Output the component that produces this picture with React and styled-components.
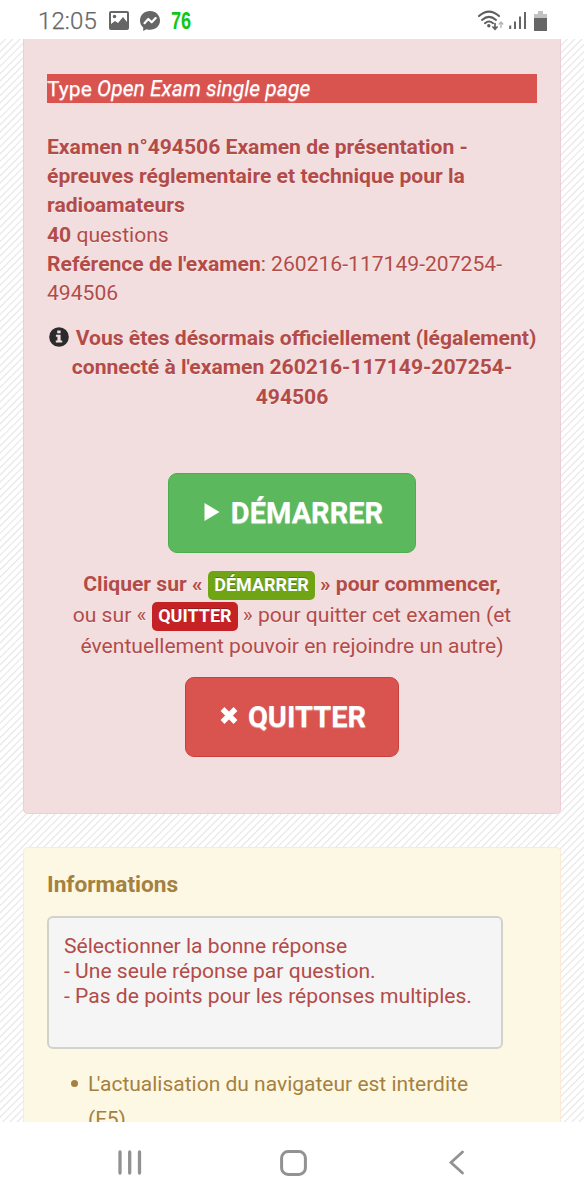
import React from "react";
import styled, { createGlobalStyle } from "styled-components";

const GlobalStyle = createGlobalStyle`
  * { box-sizing: border-box; }
  body { margin: 0; background: #fff; font-family: Roboto, "Liberation Sans", sans-serif; }
`;

const Screen = styled.div`
  width: 584px;
  height: 1200px;
  display: flex;
  flex-direction: column;
  overflow: hidden;
`;

const StatusBar = styled.header`
  flex: none;
  height: 39px;
  padding: 2px 37px 0 38px;
  display: flex;
  align-items: center;
  justify-content: space-between;
  color: #666;
`;

const StatusGroup = styled.div`
  display: flex;
  align-items: center;
  gap: ${(p) => p.$gap}px;
`;

const Clock = styled.span`
  width: 60px;
  font-size: 24px;
  font-weight: 300;
  -webkit-text-stroke: 0.25px #666;
  line-height: 36px;
  letter-spacing: 0.1px;
  white-space: nowrap;
`;

const BatteryLevel = styled.span`
  color: #0fc816;
  font: 700 23px/30px "Liberation Sans", sans-serif;
  width: 21px;
  white-space: nowrap;

  span {
    display: inline-block;
    transform: scaleX(0.79);
    transform-origin: left;
  }
`;

const Page = styled.main`
  flex: none;
  height: 1083px;
  overflow: hidden;
  padding: 0 23px;
  display: flex;
  flex-direction: column;
  gap: 33px;
  background: repeating-linear-gradient(135deg, #fff 0 2.8px, #e6e6e6 3.9px, #fff 5.1px 5.16px);
`;

const ExamCard = styled.section`
  flex: none;
  height: 775px;
  padding: 35px 23px 0;
  background: #f2dede;
  border: 1px solid #edced4;
  border-top: 0;
  border-radius: 0 0 5px 5px;
  color: #b34b49;
  font-size: 21.1px;
  line-height: 29.2px;
`;

const TypeBanner = styled.div`
  height: 29px;
  margin-bottom: 29px;
  background: #d9534f;
  color: #fff;
  text-shadow: 0 1px 1px rgba(255, 255, 255, 0.5);
  white-space: nowrap;
`;

const ExamSummary = styled.div`
  white-space: nowrap;
  text-shadow: 0 1px 0 rgba(255, 255, 255, 0.45);
`;

const Connected = styled.div`
  margin: 16px -10px 0;
  text-align: center;
  font-weight: 700;
  white-space: nowrap;
  text-shadow: 0 1px 0 rgba(255, 255, 255, 0.45);

  svg { vertical-align: -2px; margin: 0 7px 0 1px; }
`;

const ActionButton = styled.button`
  display: flex;
  align-items: center;
  justify-content: center;
  gap: ${(p) => p.$gap}px;
  width: ${(p) => p.$width}px;
  height: 80px;
  margin: ${(p) => p.$top}px auto 0;
  padding: 0 0 0 ${(p) => p.$shift}px;
  border: 1px solid ${(p) => p.$edge};
  border-radius: 9px;
  background: ${(p) => p.$fill};
  color: #fff;
  font: 700 29px/40px Roboto, sans-serif;
  text-shadow: 0 1px 1px rgba(255, 255, 255, 0.6);
  white-space: nowrap;
`;

const Instructions = styled.p`
  margin: 16px -10px 0;
  text-align: center;
  line-height: 30.8px;
  white-space: nowrap;
  text-shadow: 0 1px 0 rgba(255, 255, 255, 0.45);
`;

const Tag = styled.span`
  display: inline-block;
  height: 29px;
  padding: 0 6px;
  margin-left: 0.5px;
  border-radius: 5px;
  background: ${(p) => p.$fill};
  color: #fff;
  font-size: 18px;
  font-weight: 700;
  line-height: 28px;
  text-shadow: 0 -1px 0 rgba(0, 0, 0, 0.25);
  vertical-align: middle;
`;

const InfoCard = styled.section`
  flex: none;
  height: 320px;
  padding: 21px 23px 0;
  background: #fcf8e3;
  border: 1px solid #faebd2;
  border-radius: 5px;
  color: #a5803f;
  font-size: 21px;
`;

const InfoTitle = styled.h2`
  margin: 0;
  font-size: 22.7px;
  font-weight: 700;
  line-height: 32px;
`;

const RulesBox = styled.div`
  width: 456px;
  height: 133px;
  margin-top: 15px;
  padding: 15px 15px;
  border: 2px solid #d2d2cd;
  border-radius: 6px;
  background: #f5f5f5;
  color: #b34b49;
  font-size: 21.1px;
  line-height: 25px;
  white-space: nowrap;
`;

const RuleList = styled.ul`
  margin: 18px 0 0;
  padding: 0 0 0 41px;
  line-height: 35px;
  white-space: nowrap;
  list-style: none;
`;

const Rule = styled.li`
  &::before {
    content: "";
    display: inline-block;
    width: 7px;
    height: 7px;
    margin: 0 10px 0 -17px;
    border-radius: 50%;
    background: currentColor;
    vertical-align: 4px;
  }
`;

const Elision = styled.span`
  letter-spacing: -2.5px;
`;

const NavBar = styled.nav`
  flex: 1;
  display: flex;
  align-items: center;
  justify-content: space-between;
  padding: 3px 117px 0;

  svg:nth-child(2) { margin-right: 4px; }
`;

const ImageIcon = () => (
  <svg width="20" height="19" viewBox="0 0 20 19">
    <path fillRule="evenodd" fill="#666" d="M2 0h16a2 2 0 0 1 2 2v15a2 2 0 0 1-2 2H2a2 2 0 0 1-2-2V2a2 2 0 0 1 2-2zM2 2v11l4-3 3 2 5-6 4 5V2zM5.500 3.700a1.800 1.800 0 1 1 0 3.600 1.800 1.800 0 0 1 0-3.600z" />
  </svg>
);

const MessengerIcon = () => (
  <svg width="20" height="20" viewBox="0 0 20 20">
    <path fill="#666" d="M10 0C4.300 0 0 4.100 0 9.500c0 3 1.200 5.200 3.200 6.900V20l3.200-1.700c1.100.4 2.300.5 3.600.5 5.700 0 10-4 10-9.300S15.700 0 10 0z" />
    <path fill="none" stroke="#fff" strokeWidth="2.2" strokeLinejoin="round" strokeLinecap="round" d="M4.500 12.200 8.300 8l3.400 3.300 4-4.200" />
  </svg>
);

const WifiIcon = () => (
  <svg width="26" height="21" viewBox="0 0 26 21" fill="none" stroke="#5e5e5e" strokeWidth="2" strokeLinecap="round">
    <path d="M1 6.100Q11 -2.900 21 6.100M4 9.900Q11 3.900 18 9.900M7 13.200Q11 9.900 15 13.200" />
    <circle cx="10.800" cy="15.700" r="1.700" fill="#5e5e5e" stroke="none" />
    <path d="M17 13.500v5M14.900 17l2.100 2.200 2.100-2.200" strokeWidth="1.700" />
    <path d="M23 17.500v-5M21.200 14l1.800-2 1.800 2" stroke="#b5b5b5" strokeWidth="1.400" />
  </svg>
);

const SignalIcon = () => (
  <svg width="17" height="19" viewBox="0 0 17 19" fill="none" stroke="#666" strokeWidth="2">
    <path d="M1.200 14.500V18M6 10.500V18M11 5.500V18M16 1V18" />
  </svg>
);

const BatteryIcon = () => (
  <svg width="13" height="20" viewBox="0 0 13 20">
    <path fill="#c1c1c1" d="M4 0h5v3h4v5H0V3h4z" />
    <path fill="#666" d="M0 7h13v13H0z" />
  </svg>
);

const InfoIcon = () => (
  <svg width="20" height="20" viewBox="0 0 20 20">
    <circle cx="10" cy="10" r="9.800" fill="#2b2b2d" />
    <path fill="#f2dede" d="M8.200 3.500h3.400v2.700H8.200zM6.900 7.700h4.700v5.800h1.600v2H6.800v-2h1.600V9.700H6.900z" />
  </svg>
);

const PlayIcon = () => (
  <svg width="16" height="19" viewBox="0 0 16 19">
    <path fill="#fff" d="M0.500 0 15.500 9 0.500 18z" />
  </svg>
);

const CloseIcon = () => (
  <svg width="18" height="20" viewBox="0 0 18 20">
    <path stroke="#fff" strokeWidth="5.400" d="M2.500 2 15.500 15M15.500 2 2.500 15" />
  </svg>
);

const RecentsIcon = () => (
  <svg width="25" height="25" viewBox="0 0 25 25">
    <path stroke="#929292" strokeWidth="3.300" strokeLinecap="round" d="M3 2v21M12.700 2v21M22.500 2v21" />
  </svg>
);

const HomeIcon = () => (
  <svg width="27" height="26" viewBox="0 0 27 26">
    <rect x="1.600" y="1.600" width="23.800" height="22.800" rx="6.500" fill="none" stroke="#929292" strokeWidth="3" />
  </svg>
);

const BackIcon = () => (
  <svg width="19" height="25" viewBox="0 0 19 25">
    <path d="M14.500 2 3 12.500l11.500 10.500" fill="none" stroke="#929292" strokeWidth="2.800" strokeLinecap="round" />
  </svg>
);

export default function App() {
  return (
    <Screen>
      <GlobalStyle />
      <StatusBar>
        <StatusGroup $gap={11}>
          <Clock>12:05</Clock>
          <ImageIcon />
          <MessengerIcon />
          <BatteryLevel><span>76</span></BatteryLevel>
        </StatusGroup>
        <StatusGroup $gap={8}>
          <StatusGroup $gap={5}>
            <WifiIcon />
            <SignalIcon />
          </StatusGroup>
          <BatteryIcon />
        </StatusGroup>
      </StatusBar>
      <Page>
        <ExamCard>
          <TypeBanner>Type <em>Open Exam single page</em></TypeBanner>
          <ExamSummary>
            <b>Examen n°494506 Examen de présentation -<br />
            épreuves réglementaire et technique pour la<br />
            radioamateurs</b><br />
            <b>40</b> questions<br />
            <b>Reférence de l'examen</b>: 260216-117149-207254-<br />
            494506
          </ExamSummary>
          <Connected>
            <InfoIcon />Vous êtes désormais officiellement (légalement)<br />
            connecté à l'examen 260216-117149-207254-<br />
            494506
          </Connected>
          <ActionButton $width={248} $top={62} $gap={11} $shift={3} $fill="#5cb85c" $edge="#4cae4c">
            <PlayIcon />DÉMARRER
          </ActionButton>
          <Instructions>
            <b>Cliquer sur « <Tag $fill="#6fa514">DÉMARRER</Tag> » pour commencer,</b><br />
            ou sur « <Tag $fill="#c52225">QUITTER</Tag> » pour quitter cet examen (et<br />
            éventuellement pouvoir en rejoindre un autre)
          </Instructions>
          <ActionButton $width={214} $top={16} $gap={10} $shift={2} $fill="#d9534f" $edge="#c9403c">
            <CloseIcon />QUITTER
          </ActionButton>
        </ExamCard>
        <InfoCard>
          <InfoTitle>Informations</InfoTitle>
          <RulesBox>
            Sélectionner la bonne réponse<br />
            - Une seule réponse par question.<br />
            - Pas de points pour les réponses multiples.
          </RulesBox>
          <RuleList>
            <Rule><Elision>L</Elision>'actualisation du navigateur est interdite<br />(F5)</Rule>
          </RuleList>
        </InfoCard>
      </Page>
      <NavBar>
        <RecentsIcon />
        <HomeIcon />
        <BackIcon />
      </NavBar>
    </Screen>
  );
}
